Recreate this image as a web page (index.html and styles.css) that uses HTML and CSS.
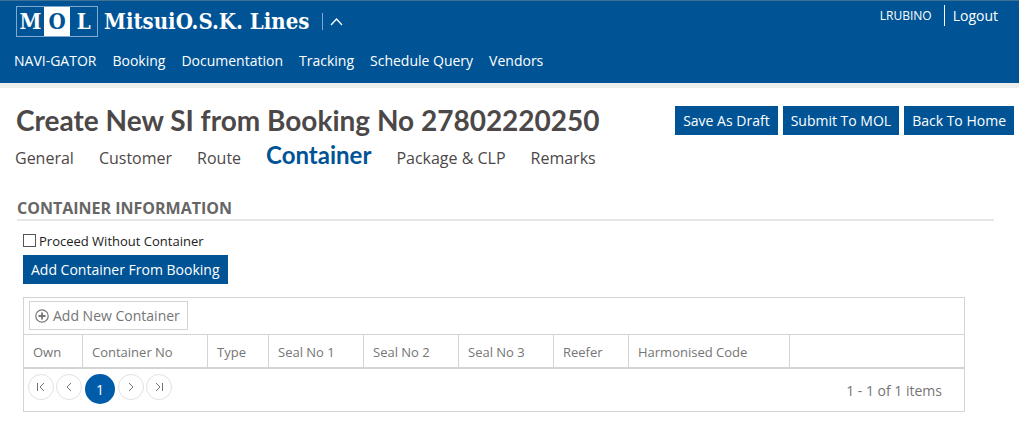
FILE: index.html
```html
<!DOCTYPE html>
<html lang="en">
<head>
<meta charset="utf-8">
<title>Create New SI from Booking</title>
<link rel="stylesheet" href="styles.css">
</head>
<body>
<header class="site-header">
  <div class="header-top">
    <div class="brand">
      <div class="logo"><span>M</span><span class="logo-mid">O</span><span>L</span></div>
      <div class="brand-name">MitsuiO.S.K. Lines</div>
      <button class="collapse" type="button" aria-label="Collapse header">
        <svg width="13" height="9" viewBox="0 0 13 9"><path d="M1 8 6.500 2 12 8" fill="none" stroke="currentColor" stroke-width="1.300"/></svg>
      </button>
    </div>
    <div class="account">
      <span class="user">LRUBINO</span>
      <a class="logout" href="#">Logout</a>
    </div>
  </div>
  <nav class="main-nav">
    <a href="#">NAVI-GATOR</a>
    <a href="#">Booking</a>
    <a href="#">Documentation</a>
    <a href="#">Tracking</a>
    <a href="#">Schedule Query</a>
    <a href="#">Vendors</a>
  </nav>
</header>
<main>
  <div class="title-row">
    <h1>Create New SI from Booking No 27802220250</h1>
    <div class="actions">
      <button class="btn" type="button">Save As Draft</button>
      <button class="btn" type="button">Submit To MOL</button>
      <button class="btn" type="button">Back To Home</button>
    </div>
  </div>
  <nav class="tabs">
    <a href="#">General</a>
    <a href="#">Customer</a>
    <a href="#">Route</a>
    <a class="active" href="#" aria-current="page">Container</a>
    <a href="#">Package &amp; CLP</a>
    <a href="#">Remarks</a>
  </nav>
  <section class="section">
    <h2>CONTAINER INFORMATION</h2>
    <div class="section-body">
      <label class="check"><input type="checkbox"><span>Proceed Without Container</span></label>
      <button class="btn" type="button">Add Container From Booking</button>
      <div class="grid">
        <div class="toolbar">
          <button class="add" type="button">
            <svg width="14" height="14" viewBox="0 0 14 14" fill="none" stroke="currentColor"><circle cx="7" cy="7" r="6.200" stroke-width="1.200"/><path d="M7 3.500v7M3.500 7h7" stroke-width="1.800"/></svg>
            <span>Add New Container</span>
          </button>
        </div>
        <table>
          <colgroup><col class="c-own"><col class="c-no"><col class="c-type"><col class="c-seal"><col class="c-seal"><col class="c-seal"><col class="c-reefer"><col class="c-code"><col></colgroup>
          <thead>
            <tr><th>Own</th><th>Container No</th><th>Type</th><th>Seal No 1</th><th>Seal No 2</th><th>Seal No 3</th><th>Reefer</th><th>Harmonised Code</th><th></th></tr>
          </thead>
        </table>
        <div class="pager">
          <div class="pages">
            <button type="button" aria-label="First page"><svg width="10" height="10" viewBox="0 0 10 10"><path d="M1.500 1v8M8 1 4 5l4 4"/></svg></button>
            <button type="button" aria-label="Previous page"><svg width="10" height="10" viewBox="0 0 10 10"><path d="M7 1 3 5l4 4"/></svg></button>
            <button class="current" type="button">1</button>
            <button type="button" aria-label="Next page"><svg width="10" height="10" viewBox="0 0 10 10"><path d="m3 1 4 4-4 4"/></svg></button>
            <button type="button" aria-label="Last page"><svg width="10" height="10" viewBox="0 0 10 10"><path d="M8.500 1v8M2 1l4 4-4 4"/></svg></button>
          </div>
          <span class="count">1 - 1 of 1 items</span>
        </div>
      </div>
    </div>
  </section>
</main>
</body>
</html>
```
FILE: styles.css
```css
* { box-sizing: border-box; }
body { margin: 0; background: #fff; color: #4c4848; font-family: "Open Sans", "Noto Sans", sans-serif; font-size: 14px; }
a { color: inherit; text-decoration: none; }
button { font: inherit; cursor: pointer; }
svg { display: block; }

.site-header { background: #005496; color: #fff; border-top: 1px solid #3f7195; border-bottom: 5px solid #eeeeec; }
.header-top { display: flex; justify-content: space-between; align-items: flex-start; height: 50px; }
.brand { display: flex; align-items: center; padding: 5px 0 0 16px; font-family: "DejaVu Serif Condensed", "DejaVu Serif", serif; font-weight: bold; }
.logo { display: flex; width: 82px; height: 31px; border: 1px solid #7fa9cf; font-size: 22px; line-height: 29px; text-align: center; }
.logo span { flex: 1; }
.logo-mid { background: #fff; color: #005496; }
.brand-name { margin-left: 6px; font-size: 22px; line-height: 31px; }
.collapse { margin-left: 13px; padding: 4px 0 4px 7px; border: 0; border-left: 1px solid #7fa9cf; background: none; color: #fff; }
.account { display: flex; align-items: center; padding: 4px 21px 0 0; }
.user { padding-right: 12px; font-size: 12px; }
.logout { padding-left: 8px; border-left: 1px solid #fff; line-height: 21px; }
.main-nav { display: flex; gap: 16px; padding: 0 0 12px 14px; line-height: 20px; }

.title-row { display: flex; justify-content: space-between; align-items: center; padding: 13px 5px 0 16px; }
h1 { margin: 0; font-family: Lato, "Open Sans", sans-serif; font-size: 28px; line-height: 38px; font-weight: bold; white-space: nowrap; }
.actions { display: flex; gap: 5px; }
.btn { height: 29px; padding: 0 8px; border: 0; background: #005496; color: #fff; white-space: nowrap; }
.tabs { display: flex; align-items: baseline; gap: 25px; height: 36px; padding-left: 15px; font-size: 16px; line-height: 32px; }
.tabs .active { color: #005496; font-family: Lato, "Open Sans", sans-serif; font-size: 24px; font-weight: bold; }

.section { margin: 22px 25px 0 17px; }
h2 { margin: 0; border-bottom: 2px solid #e6e6e6; color: #666; font-size: 16px; line-height: 22px; }
.section-body { padding: 9px 29px 0 6px; }
.check { display: flex; align-items: center; gap: 3px; height: 21px; margin-bottom: 4px; color: #222; font-size: 13px; }
.check input { appearance: none; width: 13px; height: 13px; margin: 0; border: 1px solid #555; background: #fff; }
.check input:checked { background: #005496; }
.grid { margin-top: 13px; border: 1px solid #d4d4d4; color: #757575; }
.toolbar { padding: 3px 5px 4px; }
.add { display: flex; align-items: center; gap: 4px; height: 29px; padding: 0 7px 0 5px; border: 1px solid #d4d4d4; background: #fff; color: #757575; }
table { width: 100%; border-collapse: separate; border-spacing: 0; table-layout: fixed; border-top: 1px solid #d4d4d4; border-bottom: 2px solid #d4d4d4; }
th { height: 32px; padding: 1px 0 0 9px; border-right: 1px solid #d4d4d4; font-size: 13px; font-weight: normal; text-align: left; white-space: nowrap; }
th:last-child { border-right: 0; }
.c-own { width: 59px; }
.c-no { width: 125px; }
.c-type { width: 61px; }
.c-seal { width: 95px; }
.c-reefer { width: 75px; }
.c-code { width: 161px; }
.pager { display: flex; justify-content: space-between; align-items: flex-start; min-height: 42px; padding: 5px 22px 6px 4px; }
.pages { display: flex; align-items: flex-start; gap: 2px; }
.pages button { display: grid; place-items: center; width: 26px; height: 26px; padding: 0; border: 1px solid #e2e2e2; border-radius: 50%; background: #fff; color: #757575; }
.pages .current { width: 30px; height: 30px; margin: 0 1px; border: 0; background: #005ca9; color: #fff; }
.pages path { fill: none; stroke: currentColor; stroke-width: 1; }
.count { padding-top: 7px; line-height: 20px; }
```
